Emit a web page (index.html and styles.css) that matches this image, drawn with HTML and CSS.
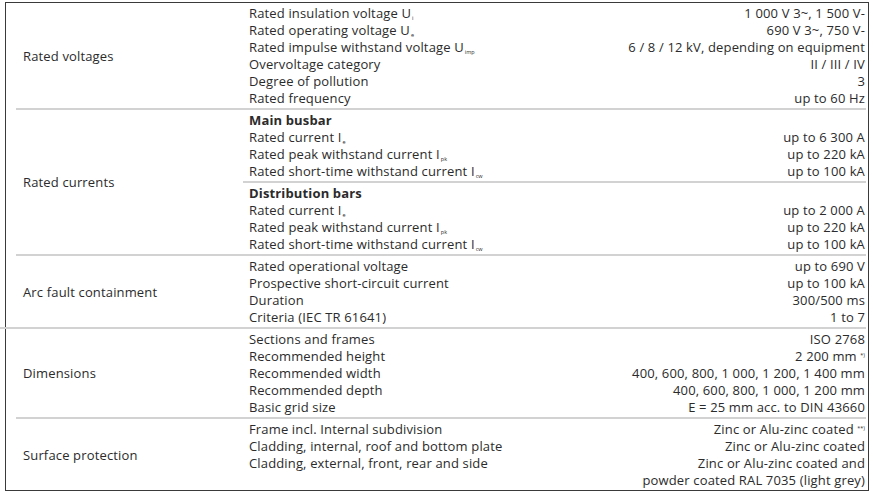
FILE: index.html
```html
<!DOCTYPE html>
<html>
<head>
<meta charset="utf-8">
<link rel="stylesheet" href="styles.css">
</head>
<body>
<div class="table">
  <div class="group">
    <div class="label">Rated voltages</div>
    <div class="items">
      <div class="row"><span>Rated insulation voltage U<sub>i</sub></span><span>1 000 V 3~, 1 500 V-</span></div>
      <div class="row"><span>Rated operating voltage U<sub>e</sub></span><span>690 V 3~, 750 V-</span></div>
      <div class="row"><span>Rated impulse withstand voltage U<sub>imp</sub></span><span>6 / 8 / 12 kV, depending on equipment</span></div>
      <div class="row"><span>Overvoltage category</span><span>II / III / IV</span></div>
      <div class="row"><span>Degree of pollution</span><span>3</span></div>
      <div class="row"><span>Rated frequency</span><span>up to 60 Hz</span></div>
    </div>
  </div>
  <div class="group sep">
    <div class="label">Rated currents</div>
    <div class="items">
      <div class="sub">
        <div class="row head"><span>Main busbar</span></div>
        <div class="row"><span>Rated current I<sub>e</sub></span><span>up to 6 300 A</span></div>
        <div class="row"><span>Rated peak withstand current I<sub>pk</sub></span><span>up to 220 kA</span></div>
        <div class="row"><span>Rated short-time withstand current I<sub>cw</sub></span><span>up to 100 kA</span></div>
      </div>
      <div class="sub sub-sep">
        <div class="row head"><span>Distribution bars</span></div>
        <div class="row"><span>Rated current I<sub>e</sub></span><span>up to 2 000 A</span></div>
        <div class="row"><span>Rated peak withstand current I<sub>pk</sub></span><span>up to 220 kA</span></div>
        <div class="row"><span>Rated short-time withstand current I<sub>cw</sub></span><span>up to 100 kA</span></div>
      </div>
    </div>
  </div>
  <div class="group sep">
    <div class="label">Arc fault containment</div>
    <div class="items">
      <div class="row"><span>Rated operational voltage</span><span>up to 690 V</span></div>
      <div class="row"><span>Prospective short-circuit current</span><span>up to 100 kA</span></div>
      <div class="row"><span>Duration</span><span>300/500 ms</span></div>
      <div class="row"><span>Criteria (IEC TR 61641)</span><span>1 to 7</span></div>
    </div>
  </div>
  <div class="group sep sep-wide">
    <div class="label">Dimensions</div>
    <div class="items">
      <div class="row"><span>Sections and frames</span><span>ISO 2768</span></div>
      <div class="row"><span>Recommended height</span><span>2 200 mm <sup>*)</sup></span></div>
      <div class="row"><span>Recommended width</span><span>400, 600, 800, 1 000, 1 200, 1 400 mm</span></div>
      <div class="row"><span>Recommended depth</span><span>400, 600, 800, 1 000, 1 200 mm</span></div>
      <div class="row"><span>Basic grid size</span><span>E = 25 mm acc. to DIN 43660</span></div>
    </div>
  </div>
  <div class="group sep">
    <div class="label">Surface protection</div>
    <div class="items">
      <div class="row"><span>Frame incl. Internal subdivision</span><span>Zinc or Alu-zinc coated <sup>**)</sup></span></div>
      <div class="row"><span>Cladding, internal, roof and bottom plate</span><span>Zinc or Alu-zinc coated</span></div>
      <div class="row"><span>Cladding, external, front, rear and side</span><span>Zinc or Alu-zinc coated and</span></div>
      <div class="row"><span></span><span>powder coated RAL 7035 (light grey)</span></div>
    </div>
  </div>
</div>
</body>
</html>
```
FILE: styles.css
```css
html, body {
  margin: 0;
  padding: 0;
  background: #ffffff;
}
body {
  font-family: "Open Sans", "Noto Sans", sans-serif;
  font-size: 13px;
  letter-spacing: 0.15px;
  color: #2b2b2b;
}
.table {
  margin: 2px 0 0 5px;
  width: 864px;
  border: 1px solid #3a3a3a;
  box-sizing: border-box;
}
.group {
  display: grid;
  grid-template-columns: 233px 1fr;
  margin: 0 2px 0 10px;
  padding: 1.5px 0;
}
.sep {
  border-top: 2px solid #d2d2d2;
}
.sep-wide {
  margin-left: -6px;
  grid-template-columns: 249px 1fr;
}
.sep-wide .label {
  padding-left: 23px;
}
.label {
  align-self: center;
  padding-left: 7px;
}
.items {
  display: flex;
  flex-direction: column;
}
.row {
  display: flex;
  justify-content: space-between;
  height: 17px;
  line-height: 17px;
  white-space: nowrap;
  padding-right: 1px;
}
.head {
  font-weight: 700;
}
.sub-sep {
  border-top: 2px solid #d2d2d2;
  margin-left: -6px;
  padding-left: 6px;
  margin-top: 1.5px;
  padding-top: 1.5px;
}
sub {
  font-size: 5.5px;
  letter-spacing: 0;
  vertical-align: -2px;
  line-height: 1;
  margin-left: 1px;
}
sup {
  font-size: 5.5px;
  letter-spacing: 0;
  vertical-align: 4px;
  line-height: 1;
}
```
